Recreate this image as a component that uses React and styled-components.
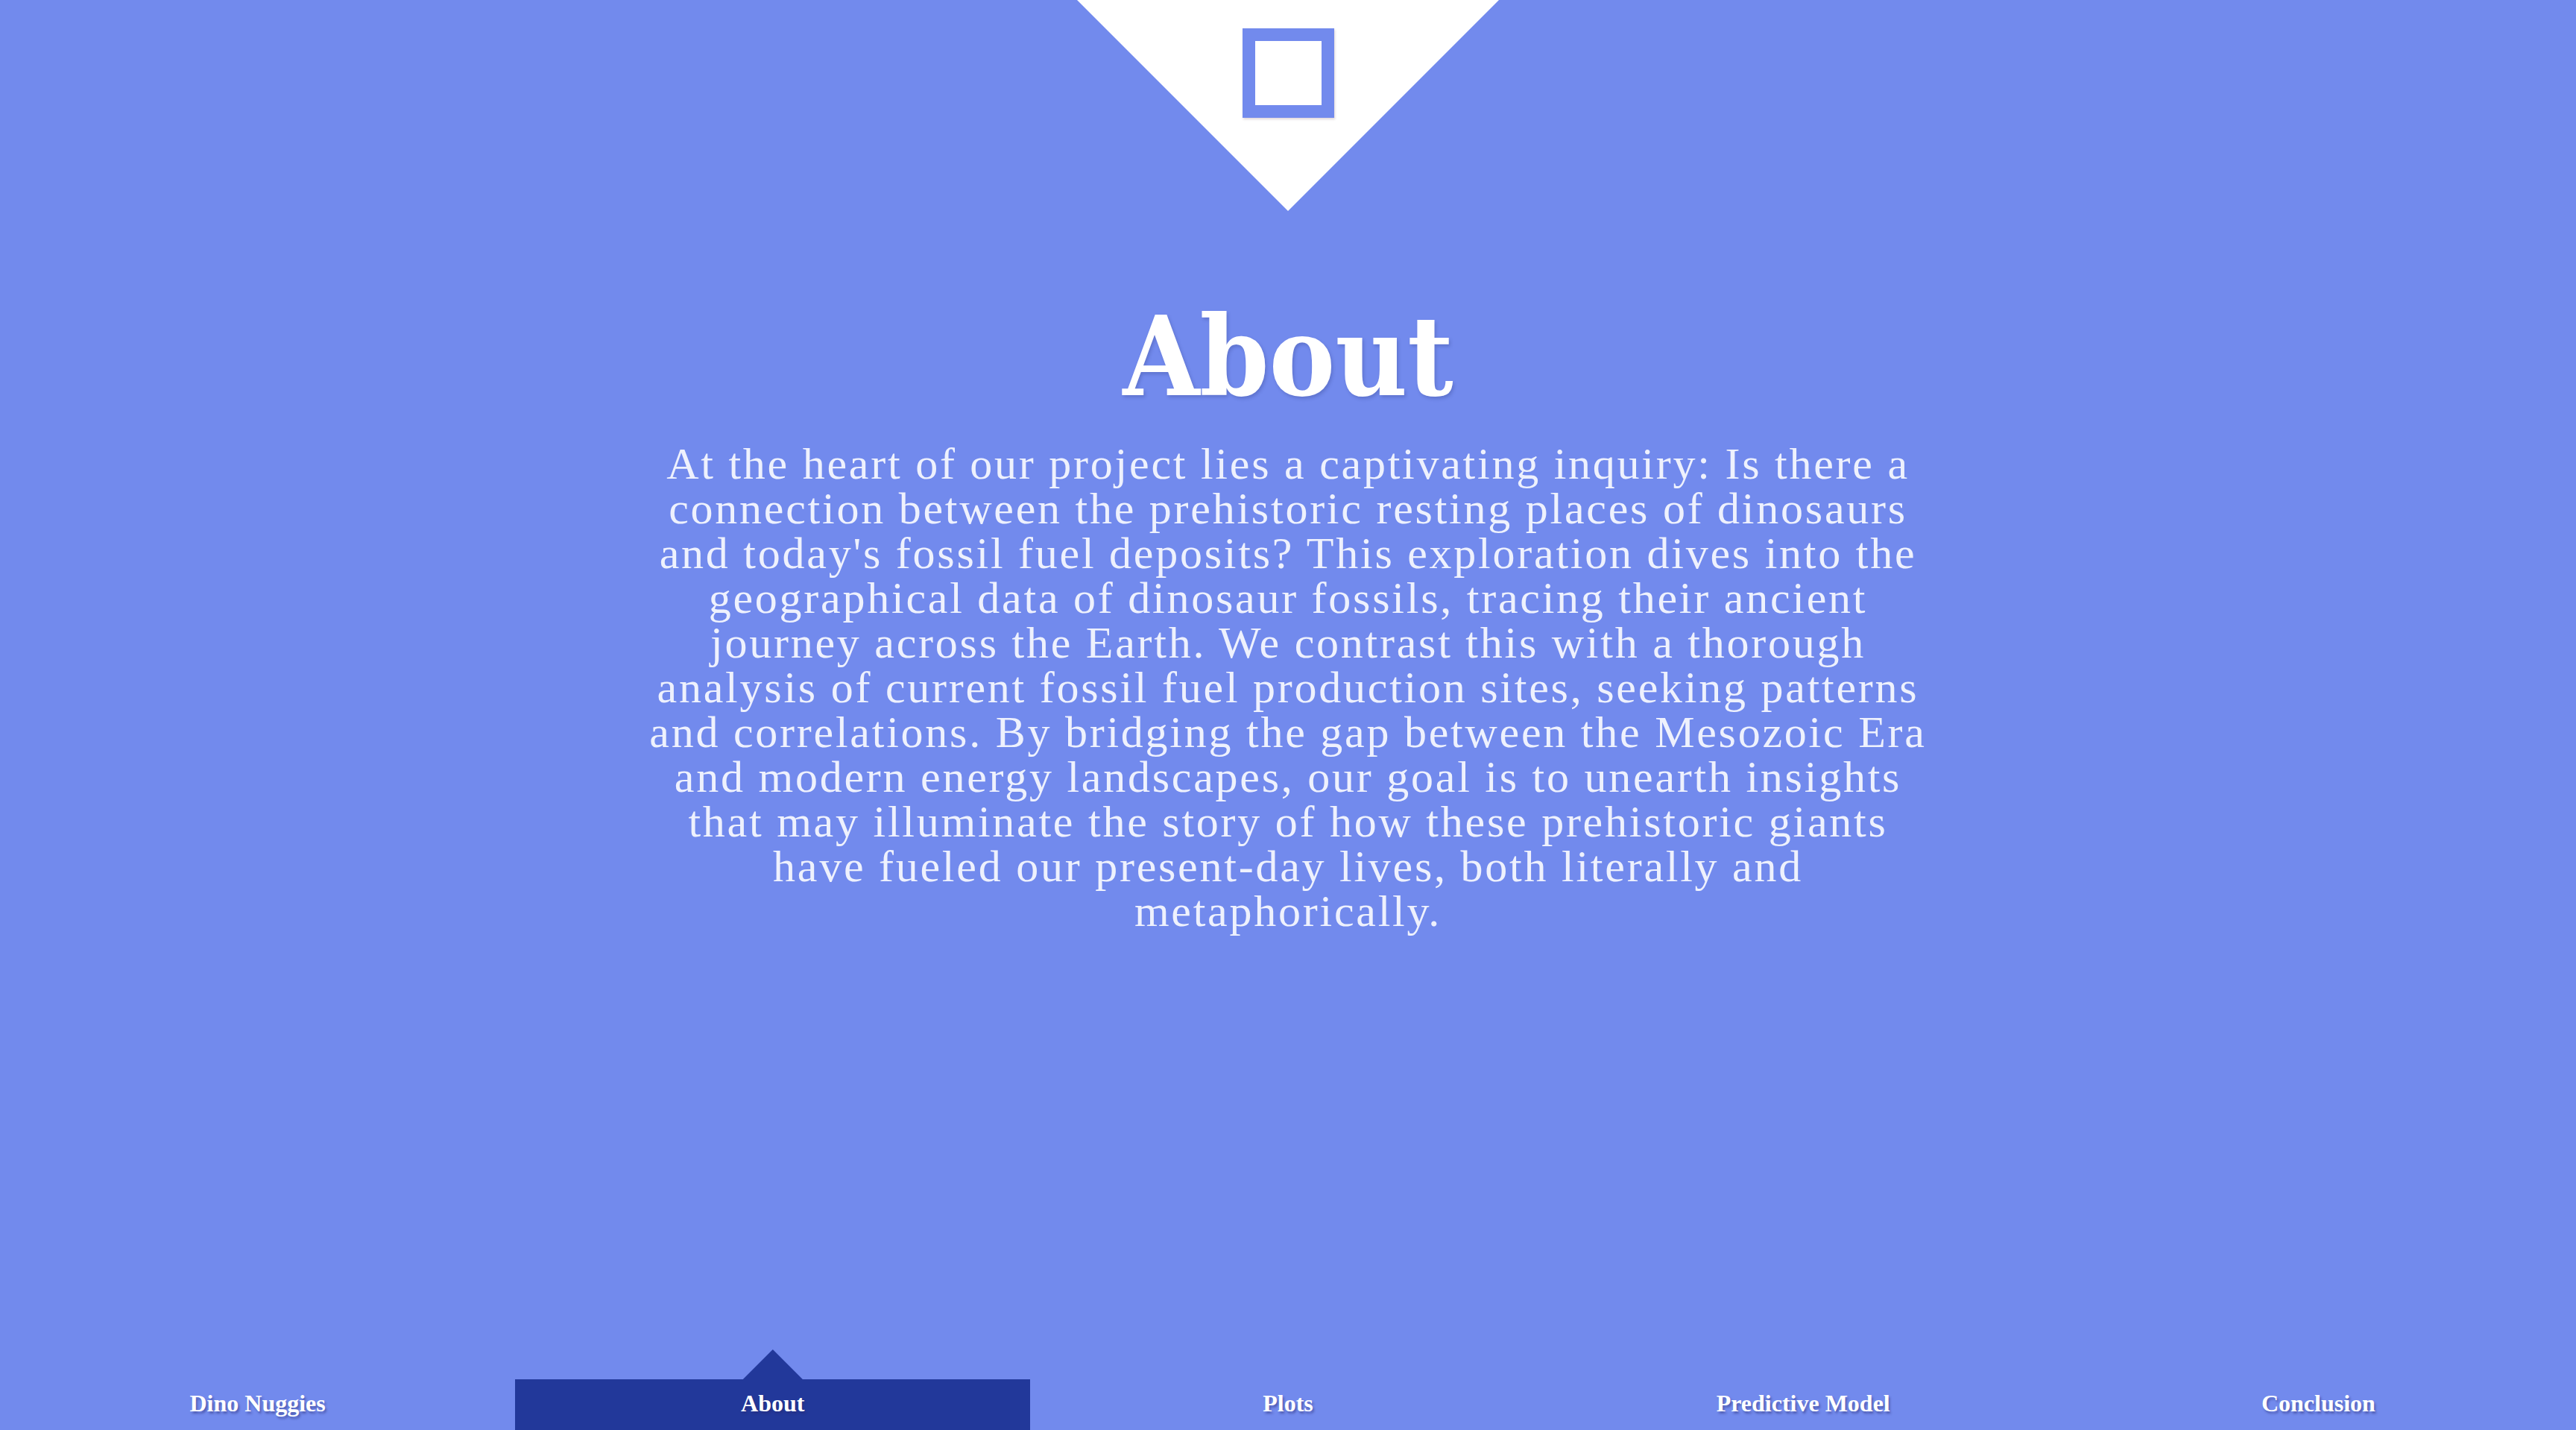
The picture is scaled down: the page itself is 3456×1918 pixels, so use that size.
import React from "react";
import styled, { createGlobalStyle } from "styled-components";

const lines = [
  "At the heart of our project lies a captivating inquiry: Is there a",
  "connection between the prehistoric resting places of dinosaurs",
  "and today's fossil fuel deposits? This exploration dives into the",
  "geographical data of dinosaur fossils, tracing their ancient",
  "journey across the Earth. We contrast this with a thorough",
  "analysis of current fossil fuel production sites, seeking patterns",
  "and correlations. By bridging the gap between the Mesozoic Era",
  "and modern energy landscapes, our goal is to unearth insights",
  "that may illuminate the story of how these prehistoric giants",
  "have fueled our present-day lives, both literally and",
  "metaphorically.",
];

const tabs = ["Dino Nuggies", "About", "Plots", "Predictive Model", "Conclusion"];

const App = () => {
  return (
    <Page>
      <GlobalStyle />
      <Header>
        <Badge>
          <Square />
        </Badge>
      </Header>
      <Main>
        <Title>About</Title>
        <Text>
          {lines.map((line) => (
            <Line key={line}>{line}</Line>
          ))}
        </Text>
      </Main>
      <Nav>
        {tabs.map((tab) => (
          <Tab key={tab} $active={tab === "About"}>
            {tab}
          </Tab>
        ))}
      </Nav>
    </Page>
  );
};

export default App;

const GlobalStyle = createGlobalStyle`
  html, body {
    margin: 0;
    padding: 0;
    background-color: #728aed;
  }
`;

const Page = styled.div`
  min-height: 100vh;
  display: flex;
  flex-direction: column;
  background-color: #728aed;
  overflow: hidden;
`;

const Header = styled.div`
  display: flex;
  justify-content: center;
`;

const Badge = styled.div`
  width: 566px;
  height: 283px;
  background-color: white;
  clip-path: polygon(0 0, 100% 0, 50% 100%);
  display: flex;
  justify-content: center;
  padding-top: 38px;
  box-sizing: border-box;
`;

const Square = styled.div`
  width: 123px;
  height: 120px;
  box-sizing: border-box;
  border: 17px solid #728aed;
  box-shadow: 1px 2px 3px rgba(90, 40, 60, 0.2);
`;

const Main = styled.div`
  display: flex;
  flex-direction: column;
  align-items: center;
`;

const Title = styled.h1`
  margin: 121px 0 0;
  font-family: "DejaVu Serif", "Liberation Serif", serif;
  font-stretch: condensed;
  font-weight: bold;
  font-size: 148px;
  line-height: 148px;
  color: white;
  text-shadow: 2px 3px 4px rgba(40, 50, 120, 0.25);
`;

const Text = styled.div`
  margin-top: 40px;
  font-family: "Liberation Serif", serif;
  font-size: 60px;
  line-height: 60px;
  letter-spacing: 2.75px;
  color: #eef1fd;
  text-align: center;
`;

const Line = styled.span`
  display: block;
  white-space: nowrap;
`;

const Nav = styled.div`
  margin-top: auto;
  display: grid;
  grid-template-columns: repeat(5, 1fr);
  height: 68px;
`;

const Tab = styled.div`
  position: relative;
  display: flex;
  align-items: center;
  justify-content: center;
  padding-bottom: 4px;
  box-sizing: border-box;
  font-family: "Liberation Serif", serif;
  font-weight: bold;
  font-size: 32px;
  color: white;
  text-shadow: 2px 3px 3px rgba(40, 40, 110, 0.45);
  background-color: ${(p) => (p.$active ? "#22389a" : "transparent")};

  &::before {
    content: "";
    display: ${(p) => (p.$active ? "block" : "none")};
    position: absolute;
    left: 50%;
    top: -40px;
    width: 80px;
    height: 40px;
    margin-left: -40px;
    background-color: #22389a;
    clip-path: polygon(50% 0, 100% 100%, 0 100%);
  }
`;
